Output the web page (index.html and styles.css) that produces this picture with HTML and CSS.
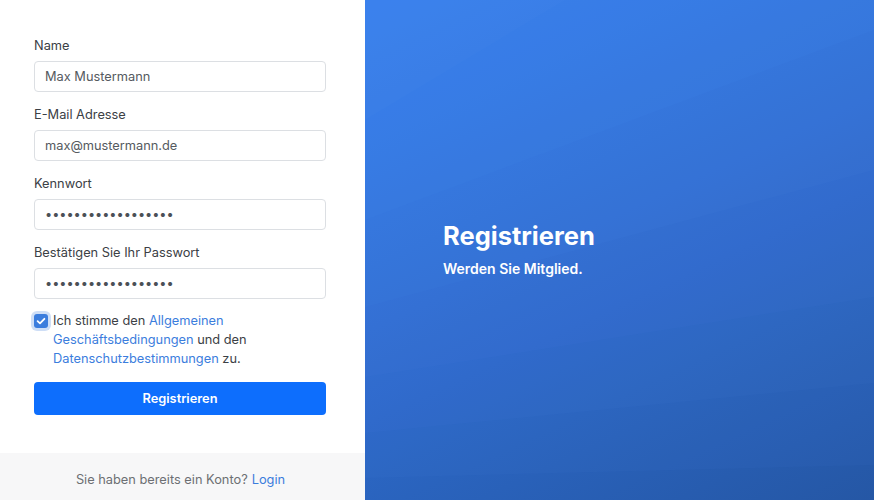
FILE: index.html
```html
<!DOCTYPE html>
<html lang="de">
<head>
<meta charset="utf-8">
<title>Registrieren</title>
<link rel="stylesheet" href="styles.css">
</head>
<body>
<div class="page">
  <main class="left">
    <form class="form">
      <div class="group">
        <label class="label" for="name">Name</label>
        <input class="input" id="name" type="text" value="Max Mustermann">
      </div>
      <div class="group">
        <label class="label" for="email">E-Mail Adresse</label>
        <input class="input" id="email" type="text" value="max@mustermann.de">
      </div>
      <div class="group">
        <label class="label" for="pw">Kennwort</label>
        <input class="input" id="pw" type="password" value="abcdefghijklmnopqr">
      </div>
      <div class="group">
        <label class="label" for="pw2">Bestätigen Sie Ihr Passwort</label>
        <input class="input" id="pw2" type="password" value="abcdefghijklmnopqr">
      </div>
      <div class="check">
        <span class="box"><svg viewBox="0 0 14 14" width="14" height="14"><path d="M3.6 7.2 L6 9.4 L10.4 4.8" fill="none" stroke="#fff" stroke-width="1.8" stroke-linecap="round" stroke-linejoin="round"/></svg></span>
        <p class="check-text">Ich stimme den <a href="#" class="link">Allgemeinen</a> <a href="#" class="link">Geschäftsbedingungen</a> und den <a href="#" class="link">Datenschutzbestimmungen</a> zu.</p>
      </div>
      <button type="button" class="btn">Registrieren</button>
    </form>
    <footer class="foot">Sie haben bereits ein Konto? <a href="#" class="link">Login</a></footer>
  </main>
  <aside class="right">
    <svg class="stripes" viewBox="0 0 509 500" preserveAspectRatio="none" aria-hidden="true">
      <polygon points="0,0 200,0 0,120" fill="#5c9cff" fill-opacity="0.06"/>
      <polygon points="0,0 509,0 509,30 0,220" fill="#5c9cff" fill-opacity="0.05"/>
      <polygon points="0,0 509,0 509,170 0,307" fill="#5c9cff" fill-opacity="0.045"/>
      <polygon points="0,0 509,0 509,297 0,377" fill="#5c9cff" fill-opacity="0.04"/>
      <polygon points="0,0 509,0 509,383 0,433" fill="#5c9cff" fill-opacity="0.04"/>
      <polygon points="0,0 509,0 509,465 0,478" fill="#5c9cff" fill-opacity="0.04"/>
    </svg>
    <div class="hero">
      <h1 class="title">Registrieren</h1>
      <p class="sub">Werden Sie Mitglied.</p>
    </div>
  </aside>
</div>
</body>
</html>
```

FILE: styles.css
```css
* { box-sizing: border-box; }
html, body { margin: 0; padding: 0; }
body {
  font-family: Inter, "Noto Sans", "Liberation Sans", sans-serif;
  font-size: 13px;
  color: #3b4045;
  background: #fff;
}
.page {
  display: flex;
  width: 874px;
  height: 500px;
  overflow: hidden;
}
.left {
  width: 365px;
  flex: none;
  display: flex;
  flex-direction: column;
  background: #fff;
}
.form {
  padding: 36px 39px 0 34px;
  display: flex;
  flex-direction: column;
}
.group {
  display: flex;
  flex-direction: column;
  margin-bottom: 13px;
}
.label {
  line-height: 19px;
  margin-bottom: 6px;
  color: #3b4045;
  font-size: 12.8px;
}
.input {
  height: 31px;
  width: 292px;
  border: 1px solid #dcdfe3;
  border-radius: 4px;
  padding: 0 10px;
  font-family: inherit;
  font-size: 12.8px;
  color: #555a60;
  background: #fff;
  outline: none;
}
.input[type="password"] {
  letter-spacing: -0.05px;
  color: #4b5056;
}
.check {
  display: flex;
  align-items: flex-start;
  gap: 5px;
  margin-top: -1px;
}
.box {
  width: 14px;
  height: 14px;
  margin-top: 2.5px;
  flex: none;
  border-radius: 3px;
  background: #3b7ddd;
  box-shadow: 0 0 0 3px rgba(59, 125, 221, 0.25);
  display: flex;
}
.check-text {
  margin: 0;
  line-height: 19px;
  width: 230px;
  font-size: 12.8px;
  color: #3b4045;
}
.link {
  color: #3b7ddd;
  text-decoration: none;
}
.btn {
  margin-top: 13.5px;
  width: 292px;
  height: 33px;
  border: none;
  border-radius: 4px;
  background: #0d6efd;
  color: #fff;
  font-family: inherit;
  font-size: 12.8px;
  font-weight: 600;
}
.foot {
  margin-top: auto;
  height: 47px;
  background: #f7f7f8;
  display: flex;
  align-items: center;
  justify-content: center;
  gap: 4px;
  color: #6c6f73;
  font-size: 12.8px;
  padding-top: 5px;
  padding-right: 4px;
}
.right {
  flex: 1;
  position: relative;
  background: linear-gradient(155deg, #347dec 0%, #2e6dd1 45%, #2557a5 100%);
  display: flex;
  align-items: center;
}
.stripes {
  position: absolute;
  inset: 0;
  width: 100%;
  height: 100%;
}
.hero {
  position: relative;
  padding-left: 78px;
}
.title {
  margin: 0;
  font-size: 25.5px;
  font-weight: 700;
  line-height: 30px;
  color: #fff;
}
.sub {
  margin: 8px 0 0;
  font-size: 14px;
  font-weight: 600;
  line-height: 20px;
  color: #fff;
}
```
